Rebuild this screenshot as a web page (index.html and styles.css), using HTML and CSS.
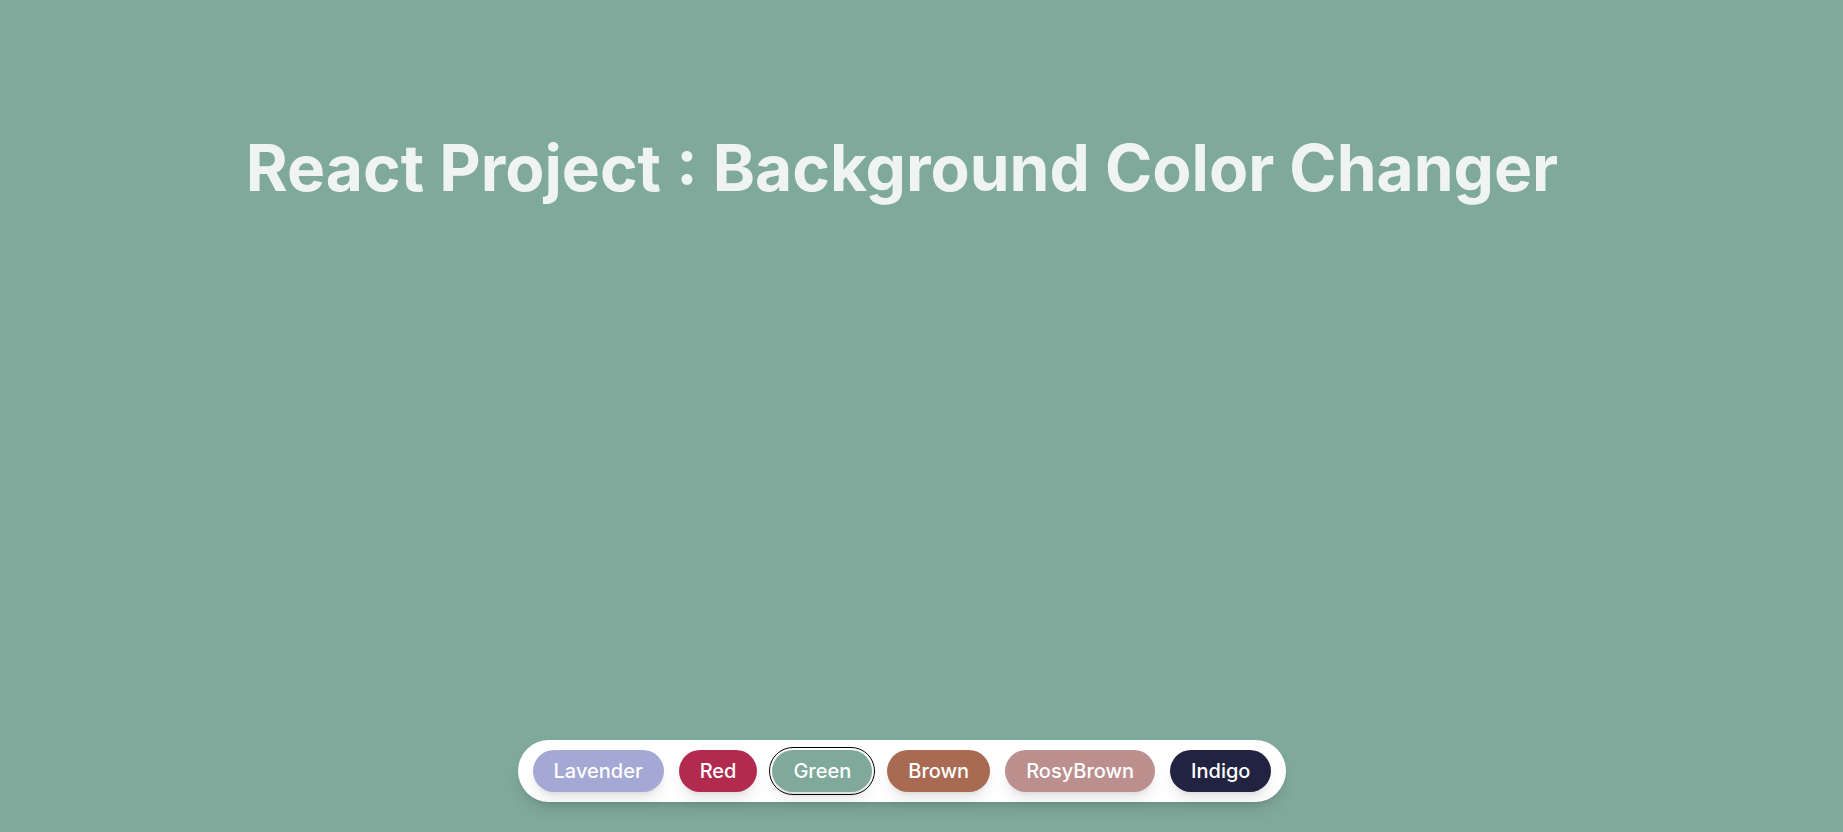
FILE: index.html
```html
<!DOCTYPE html>
<html lang="en">
<head>
<meta charset="utf-8">
<title>Background Color Changer</title>
<link rel="stylesheet" href="styles.css">
</head>
<body>
<main class="page">
  <h1 class="title">React Project : Background Color Changer</h1>
  <div class="bar">
    <button class="chip lavender">Lavender</button>
    <button class="chip red">Red</button>
    <button class="chip green active">Green</button>
    <button class="chip brown">Brown</button>
    <button class="chip rosy">RosyBrown</button>
    <button class="chip indigo">Indigo</button>
  </div>
</main>
</body>
</html>
```
FILE: styles.css
```css
html, body {
  margin: 0;
  padding: 0;
  height: 100%;
}
body {
  background: #7fa99b;
  font-family: Inter, "Noto Sans", sans-serif;
}
.page {
  box-sizing: border-box;
  height: 100vh;
  padding: 136px 39px 30px 0;
  display: flex;
  flex-direction: column;
  align-items: center;
  justify-content: space-between;
}
.title {
  margin: 0;
  font-size: 64px;
  line-height: 1;
  font-weight: 700;
  color: #eff4f2;
  text-align: center;
}
.bar {
  display: flex;
  align-items: center;
  gap: 15px;
  background: #ffffff;
  padding: 10px 15px;
  border-radius: 31px;
  box-shadow: 0 10px 15px -3px rgba(0,0,0,0.1), 0 4px 6px -4px rgba(0,0,0,0.1);
}
.chip {
  border: none;
  font-family: inherit;
  font-size: 20px;
  font-weight: 500;
  line-height: 28px;
  color: #ffffff;
  padding: 7px 21px;
  border-radius: 21px;
  box-shadow: 0 10px 15px -3px rgba(0,0,0,0.1), 0 4px 6px -4px rgba(0,0,0,0.1);
  cursor: pointer;
}
.lavender { background: #a3a8d4; }
.red { background: #b22a4e; }
.green { background: #7fa99b; }
.brown { background: #a86a52; }
.rosy { background: #bc8f8f; }
.indigo { background: #212340; }
.active {
  outline: 1.5px solid #000000;
  outline-offset: 2px;
}
```
